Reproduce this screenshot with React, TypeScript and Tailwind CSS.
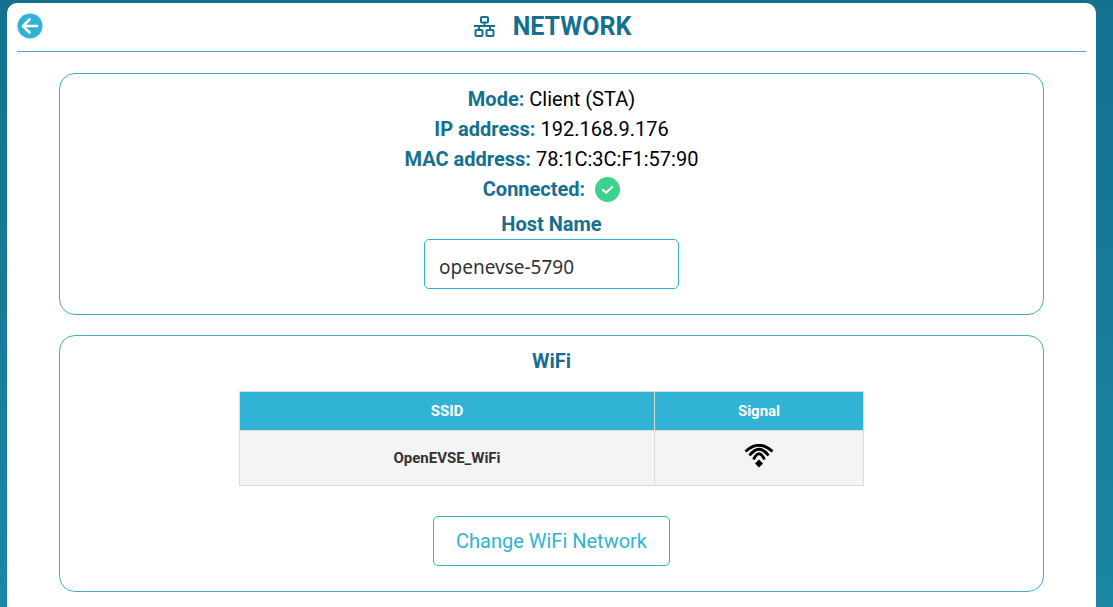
function BackIcon() {
  return (
    <svg viewBox="0 0 26 26" className="w-[26px] h-[26px]">
      <circle cx="13" cy="13" r="12.5" fill="#31b3d6" />
      <path d="M12.5 6.5 L6 13 L12.5 19.5 M7 13 H20" fill="none" stroke="#fff" strokeWidth="2.6" strokeLinecap="round" strokeLinejoin="round" />
    </svg>
  )
}

function NetworkIcon() {
  return (
    <svg viewBox="0 0 21 21" className="mb-[2px] h-[21px] w-[21px]" fill="none" stroke="#14708f" strokeWidth="2">
      <rect x="7" y="1" width="7" height="5.5" rx="1" />
      <rect x="1.5" y="14" width="7" height="6" rx="1" />
      <rect x="12.5" y="14" width="7" height="6" rx="1" />
      <path d="M10.5 6.5 V10 M0 10 H21 M5 10 V14 M16 10 V14" />
    </svg>
  )
}

function CheckIcon() {
  return (
    <svg viewBox="0 0 25 25" className="w-[25px] h-[25px]">
      <circle cx="12.5" cy="12.5" r="12.5" fill="#3dd28d" />
      <path d="M7.8 12.8 L11 15.8 L17.2 10" fill="none" stroke="#fff" strokeWidth="2.2" strokeLinecap="round" strokeLinejoin="round" />
    </svg>
  )
}

function WifiIcon() {
  return (
    <svg viewBox="0 0 30 24" className="mx-auto mb-[4px] h-[24px] w-[30px]" fill="none" stroke="#000" strokeWidth="2.8">
      <path d="M1.5 7.5 Q15 -5 28.5 7.5" />
      <path d="M5.5 11.5 Q15 -1 24.5 11.5" />
      <path d="M9.5 15.5 Q15 4 20.5 15.5" />
      <path d="M15 15.5 L19 19.5 L15 23.5 L11 19.5 Z" fill="#000" stroke="none" />
    </svg>
  )
}

function InfoRow({ label, children }: { label: string; children: React.ReactNode }) {
  return (
    <div className="flex h-[30px] items-center justify-center gap-[5px]">
      <span className="font-bold text-[#14708f]">{label}</span>
      {children}
    </div>
  )
}

export default function App() {
  return (
    <div className="h-screen overflow-hidden bg-gradient-to-b from-[#14708f] to-[#1b87a3] pl-[7px] pr-[17px] pt-[3px] font-['Roboto',sans-serif] text-[20px] text-black">
      <div className="h-[700px] rounded-t-[10px] bg-white px-[10px]">
        {/* Header */}
        <div className="relative box-content flex h-[48px] items-center justify-center border-b border-[#45acce]">
          <div className="absolute left-0 top-[10px]">
            <BackIcon />
          </div>
          <div className="flex items-center gap-[18px] pl-[2px]">
            <NetworkIcon />
            <h1 className="text-[25px] font-bold text-[#14708f]">NETWORK</h1>
          </div>
        </div>

        <div className="mx-[42px] mt-[21px] flex flex-col gap-[20px]">
          {/* Status card */}
          <section className="flex h-[242px] flex-col items-center rounded-[16px] border border-[#45acce] pt-[10px]">
            <InfoRow label="Mode:">
              <span>Client (STA)</span>
            </InfoRow>
            <InfoRow label="IP address:">
              <span>192.168.9.176</span>
            </InfoRow>
            <InfoRow label="MAC address:">
              <span>78:1C:3C:F1:57:90</span>
            </InfoRow>
            <InfoRow label="Connected:">
              <span className="ml-[5px] flex"><CheckIcon /></span>
            </InfoRow>
            <label className="mt-[5px] flex h-[30px] items-center font-bold text-[#14708f]">Host Name</label>
            <input
              readOnly
              value="openevse-5790"
              className="h-[50px] w-[255px] rounded-[5px] border border-[#31b3d6] px-[14px] pt-[5px] font-['Noto_Sans',sans-serif] text-[19px] text-[#333] outline-none"
            />
          </section>

          {/* WiFi card */}
          <section className="flex h-[257px] flex-col items-center rounded-[16px] border border-[#45acce] pt-[10px]">
            <h2 className="flex h-[30px] items-center font-bold text-[#14708f]">WiFi</h2>
            <table className="mt-[15px] w-[625px] table-fixed border-collapse text-[15px] font-bold">
              <thead>
                <tr className="h-[39px] bg-[#31b3d6] text-white">
                  <th className="w-[415px] border border-[#dddddd]">SSID</th>
                  <th className="border border-[#dddddd]">Signal</th>
                </tr>
              </thead>
              <tbody>
                <tr className="h-[55px] bg-[#f4f4f4] text-[#333]">
                  <td className="border border-[#dddddd] text-center">OpenEVSE_WiFi</td>
                  <td className="border border-[#dddddd]">
                    <WifiIcon />
                  </td>
                </tr>
              </tbody>
            </table>
            <button className="mt-[30px] h-[50px] w-[237px] rounded-[5px] border border-[#31b3d6] text-[20px] text-[#31b3d6]">
              Change WiFi Network
            </button>
          </section>
        </div>
      </div>
    </div>
  )
}
